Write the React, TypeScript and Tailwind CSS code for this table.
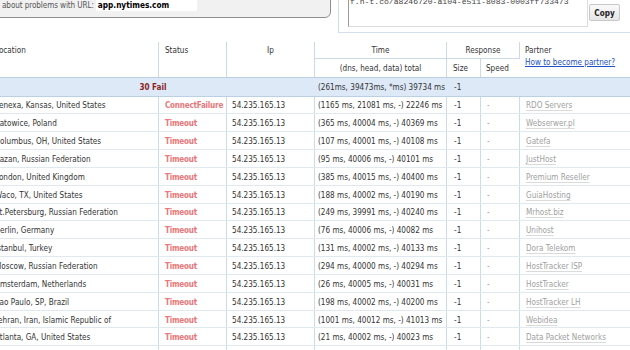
const ROWS = [
  { loc: 'Lenexa, Kansas, United States', status: 'ConnectFailure', time: '(1165 ms, 21081 ms, -) 22246 ms', partner: 'RDO Servers' },
  { loc: 'Katowice, Poland', status: 'Timeout', time: '(365 ms, 40004 ms, -) 40369 ms', partner: 'Webserwer.pl' },
  { loc: 'Columbus, OH, United States', status: 'Timeout', time: '(107 ms, 40001 ms, -) 40108 ms', partner: 'Gatefa' },
  { loc: 'Kazan, Russian Federation', status: 'Timeout', time: '(95 ms, 40006 ms, -) 40101 ms', partner: 'JustHost' },
  { loc: 'London, United Kingdom', status: 'Timeout', time: '(385 ms, 40015 ms, -) 40400 ms', partner: 'Premium Reseller' },
  { loc: 'Waco, TX, United States', status: 'Timeout', time: '(188 ms, 40002 ms, -) 40190 ms', partner: 'GuiaHosting' },
  { loc: 'St.Petersburg, Russian Federation', status: 'Timeout', time: '(249 ms, 39991 ms, -) 40240 ms', partner: 'Mrhost.biz' },
  { loc: 'Berlin, Germany', status: 'Timeout', time: '(76 ms, 40006 ms, -) 40082 ms', partner: 'Unihost' },
  { loc: 'Istanbul, Turkey', status: 'Timeout', time: '(131 ms, 40002 ms, -) 40133 ms', partner: 'Dora Telekom' },
  { loc: 'Moscow, Russian Federation', status: 'Timeout', time: '(294 ms, 40000 ms, -) 40294 ms', partner: 'HostTracker ISP' },
  { loc: 'Amsterdam, Netherlands', status: 'Timeout', time: '(26 ms, 40005 ms, -) 40031 ms', partner: 'HostTracker' },
  { loc: 'Sao Paulo, SP, Brazil', status: 'Timeout', time: '(198 ms, 40002 ms, -) 40200 ms', partner: 'HostTracker LH' },
  { loc: 'Tehran, Iran, Islamic Republic of', status: 'Timeout', time: '(1001 ms, 40012 ms, -) 41013 ms', partner: 'Webidea' },
  { loc: 'Atlanta, GA, United States', status: 'Timeout', time: '(21 ms, 40002 ms, -) 40023 ms', partner: 'Data Packet Networks' },
  { loc: 'Kiev, Ukraine', status: 'Timeout', time: '(54 ms, 40003 ms, -) 40057 ms', partner: 'HostTracker UA' },
];

const COLS = 'grid grid-cols-[168px_68px_88px_132px_34px_39px_1fr]';

export default function App() {
  return (
    <div className="w-[630px] h-[350px] overflow-hidden bg-white font-['DejaVu_Sans_Condensed','Liberation_Sans',sans-serif] text-[8.1px] leading-[10px] text-[#333]">
      {/* top: url box + share link */}
      <div className="flex items-start h-[40px]">
        <div className="-ml-[10px] -mt-[12px] w-[341px] h-[30px] flex items-end pl-[11px] pb-[6px] bg-[#f1f1f1] border border-[#8e8e8e] rounded-br-[6px]">
          <div className="flex items-center h-[12px]">
            <span className="text-[#555] tracking-[-0.1px]">about problems with URL:</span>
            <div className="ml-[2px] w-[101px] h-[12px] bg-white flex items-center pl-[2px]">
              <span className="font-bold text-[8.2px] text-black">app.nytimes.com</span>
            </div>
          </div>
        </div>
        <div className="ml-[7px] -mt-[12px] -mr-[10px] flex-1 h-[45px] flex items-start border border-[#d3dfe9] pl-[9px]">
          <div className="w-[240px] h-[38px] border-l border-l-[#9a9a9a] border-b border-b-[#dcdcdc] border-r border-r-[#dcdcdc] pt-[8px] pl-[1px]">
            <div className="font-['Liberation_Mono',monospace] text-[8.1px] leading-[10px] text-[#444]">
              f.h-t.co/a8246720-a104-e511-8083-0003ff733473
            </div>
          </div>
          <button className="mt-[15px] ml-[1px] w-[31px] h-[17px] rounded-[2px] border border-[#c8c8c8] bg-gradient-to-b from-[#fafafa] to-[#e6e6e6] font-bold text-[8.1px] text-[#222]">
            Copy
          </button>
        </div>
      </div>

      <div className="-ml-[9px] w-[650px]">
        {/* header */}
        <div className={`${COLS} grid-rows-[17px_18px] mt-[2px]`}>
          <div className="col-start-1 row-start-1 row-span-2 border-r border-[#c9d9e9] pl-[4px] pt-[3px]">Location</div>
          <div className="col-start-2 row-start-1 row-span-2 border-r border-[#c9d9e9] pl-[6px] pt-[3px]">Status</div>
          <div className="col-start-3 row-start-1 row-span-2 border-r border-[#c9d9e9] text-center pt-[3px]">Ip</div>
          <div className="col-start-4 row-start-1 border-r border-b border-[#c9d9e9] flex items-center justify-center">Time</div>
          <div className="col-start-5 col-span-2 row-start-1 border-r border-b border-[#c9d9e9] flex items-center justify-center">Response</div>
          <div className="col-start-7 row-start-1 row-span-2 pl-[5px] pt-[3px]">
            <div>Partner</div>
            <div className="mt-[2px] text-[#2250c8] underline">How to become partner?</div>
          </div>
          <div className="col-start-4 row-start-2 border-r border-[#c9d9e9] flex items-center justify-center">(dns, head, data) total</div>
          <div className="col-start-5 row-start-2 border-r border-[#c9d9e9] flex items-center pl-[6px]">Size</div>
          <div className="col-start-6 row-start-2 flex items-center pl-[5px]">Speed</div>
        </div>

        {/* summary */}
        <div className={`${COLS} h-[19.5px] items-center bg-[#dde9f7] border-y border-[#bcd0e5] whitespace-nowrap`}>
          <div className="col-span-3 text-center font-bold text-[#8a1f24]">30 Fail</div>
          <div className="pl-[3px]">(261ms, 39473ms, *ms) 39734 ms</div>
          <div className="pl-[7px]">-1</div>
        </div>

        {ROWS.map((r) => (
          <div key={r.loc} className={`${COLS} h-[17.85px] border-b border-[#e0e8f0] whitespace-nowrap`}>
            <div className="border-r border-[#ccdbea] flex items-center pl-[4px] pt-[1px]">{r.loc}</div>
            <div className="border-r border-[#ccdbea] flex items-center pl-[6px] pt-[1px] font-bold text-[#e8787a] tracking-[-0.25px]">{r.status}</div>
            <div className="border-r border-[#ccdbea] flex items-center pl-[5px] pt-[1px]">54.235.165.13</div>
            <div className="border-r border-[#ccdbea] flex items-center pl-[3px] pt-[1px]">{r.time}</div>
            <div className="border-r border-[#ccdbea] flex items-center pl-[7px] pt-[1px]">-1</div>
            <div className="border-r border-[#ccdbea] flex items-center pl-[6px] pt-[1px] text-[#999]">-</div>
            <div className="flex items-center pl-[6px] pt-[1px]">
              <span className="text-[#a0a0a0] underline decoration-[#dadada] underline-offset-2">{r.partner}</span>
            </div>
          </div>
        ))}
      </div>
    </div>
  );
}
